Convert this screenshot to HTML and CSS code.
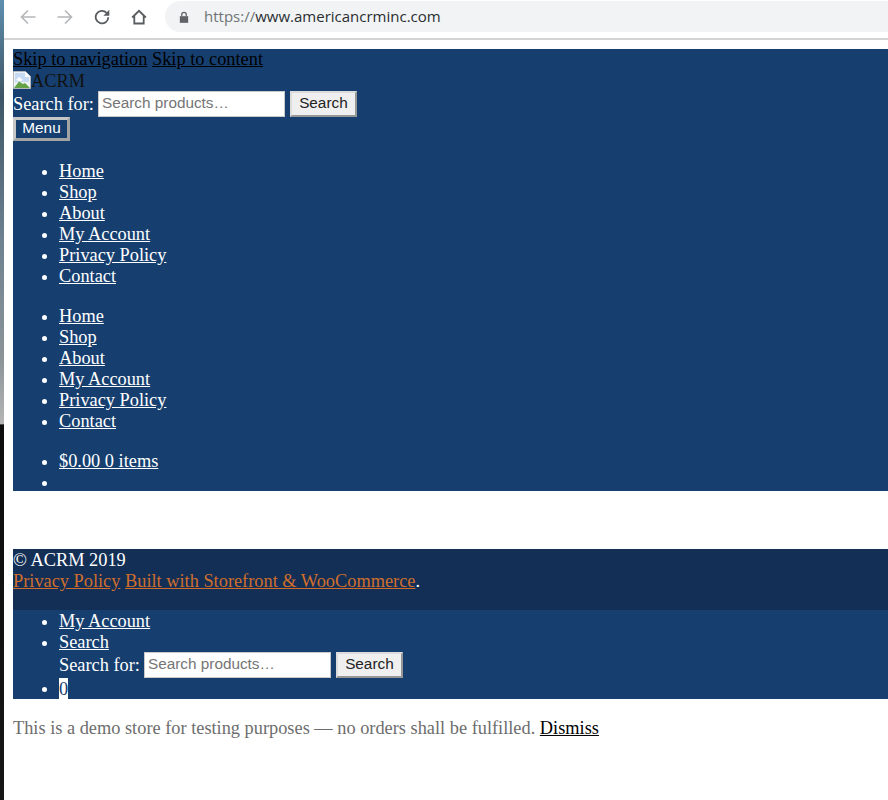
FILE: index.html
```html
<!DOCTYPE html>
<html lang="en">
<head>
<meta charset="utf-8">
<title>ACRM</title>
<link rel="stylesheet" href="styles.css">
</head>
<body>
<div class="desktop">
  <div class="edge"></div>
  <div class="window">
    <div class="toolbar">
      <svg class="nav-icon" viewBox="0 0 16 16"><path class="faded" d="M15.500 8H1.500M8 1.500L1.500 8 8 14.500"/></svg>
      <svg class="nav-icon" viewBox="0 0 16 16"><path class="faded" d="M.5 8h14M8 1.500L14.500 8 8 14.500"/></svg>
      <svg class="nav-icon" viewBox="0 0 16 16"><path class="solid" d="M14.300 8.200a6.300 6.300 0 1 1-1.700-4.400"/><path class="solid-fill" d="M15.300.8v5.900H9.400z"/></svg>
      <svg class="nav-icon" viewBox="0 0 16 16"><path class="solid" d="M1.200 8.500L8 1.800l6.800 6.700M3.300 7v7.500h9.400V7"/></svg>
      <div class="omnibox">
        <svg class="lock" viewBox="0 0 12 14"><path class="lock-body" d="M1 6h10v8H1z"/><path class="lock-loop" d="M3.300 6V4a2.700 2.700 0 0 1 5.400 0v2"/></svg>
        <span class="url"><span class="scheme">https://</span>www.americancrminc.com</span>
      </div>
    </div>
    <div class="page">
      <header class="site-header">
        <div><a class="dark-link" href="#">Skip to navigation</a> <a class="dark-link" href="#">Skip to content</a></div>
        <div class="logo">
          <svg class="broken" viewBox="0 0 18 18"><path fill="#eef1f4" stroke="#b4b8bc" d="M.5.5h12l5 5v12H.5z"/><path fill="#c6daf3" d="M2 2h10v4h4v5H2z"/><path fill="#fff" d="M3 9l3-3 4 3-3 1.500z"/><path fill="#64a345" d="M1 17l5-6.500 4 2.500 2-1 5 5z"/><path fill="#fff" d="M12.500 1l4.500 4.500h-4.500z"/></svg><span class="logo-text">ACRM</span>
        </div>
        <form class="search-form">
          <label class="search-label">Search for:</label>
          <input class="search-input" type="text" placeholder="Search products…">
          <button class="search-btn" type="button">Search</button>
        </form>
        <button class="menu-btn" type="button">Menu</button>
        <ul class="list">
          <li><a href="#">Home</a></li>
          <li><a href="#">Shop</a></li>
          <li><a href="#">About</a></li>
          <li><a href="#">My Account</a></li>
          <li><a href="#">Privacy Policy</a></li>
          <li><a href="#">Contact</a></li>
        </ul>
        <ul class="list">
          <li><a href="#">Home</a></li>
          <li><a href="#">Shop</a></li>
          <li><a href="#">About</a></li>
          <li><a href="#">My Account</a></li>
          <li><a href="#">Privacy Policy</a></li>
          <li><a href="#">Contact</a></li>
        </ul>
        <ul class="list list-last">
          <li><a href="#">$0.00 0 items</a></li>
          <li class="empty-item"></li>
        </ul>
      </header>
      <div class="spacer"></div>
      <footer class="site-footer">
        <div>© ACRM 2019</div>
        <div><a class="orange-link" href="#">Privacy Policy</a> <a class="orange-link" href="#">Built with Storefront &amp; WooCommerce</a>.</div>
      </footer>
      <div class="handheld">
        <ul class="list list-flush">
          <li><a href="#">My Account</a></li>
          <li><a href="#">Search</a>
            <form class="search-form search-form-nested">
              <label class="search-label">Search for:</label>
              <input class="search-input" type="text" placeholder="Search products…">
              <button class="search-btn" type="button">Search</button>
            </form>
          </li>
          <li><span class="count">0</span></li>
        </ul>
      </div>
      <p class="notice">This is a demo store for testing purposes — no orders shall be fulfilled. <a class="dismiss" href="#">Dismiss</a></p>
    </div>
  </div>
</div>
</body>
</html>
```
FILE: styles.css
```css
* { box-sizing: border-box; }
html, body { margin: 0; padding: 0; height: 100%; overflow: hidden; background: #fff; }
body { font-family: "Liberation Serif", serif; font-size: 18.33px; line-height: 21px; color: #000; }
.desktop { display: flex; height: 800px; }
.edge {
  flex: 0 0 4px;
  background: linear-gradient(#5f8fae 0, #3d5566 12%, #6d8190 30%, #8b9498 45%, #b5b5b5 53%, #0d0d0d 53.1%, #161616 100%);
}
.window { flex: 1; min-width: 0; }
.toolbar {
  display: flex;
  align-items: center;
  height: 40px;
  padding: 2px 0 7px 16px;
  border-bottom: 2px solid #d3d3d3;
}
.nav-icon { width: 16px; height: 16px; margin-right: 21px; flex: none; }
.nav-icon:nth-child(4) { margin-right: 18px; }
.faded { fill: none; stroke: #b4b6b8; stroke-width: 1.6; }
.solid { fill: none; stroke: #5a5d60; stroke-width: 1.8; }
.solid-fill { fill: #5a5d60; }
.omnibox {
  flex: 1;
  display: flex;
  align-items: center;
  height: 31px;
  padding-left: 14px;
  background: #f1f3f4;
  border-radius: 16px 0 0 16px;
}
.lock { width: 10px; height: 12px; margin-right: 15px; flex: none; }
.lock-body { fill: #5f6368; }
.lock-loop { fill: none; stroke: #5f6368; stroke-width: 1.5; }
.url { font-family: "Open Sans", sans-serif; font-size: 15px; color: #2b2e31; }
.scheme { color: #6f7377; }
.page { padding: 9px 0 0 9px; }
.site-header { background: #163f70; color: #fff; height: 442px; }
.dark-link { color: #000; }
.logo { display: flex; align-items: flex-start; color: #111; height: 21px; }
.logo-text { line-height: 23px; }
.broken { width: 18px; height: 18px; flex: none; margin-top: 1px; }
.search-form { display: flex; align-items: center; height: 26px; }
.search-form-nested { margin-top: -1px; margin-bottom: 0; }
.search-label { margin-right: 4px; }
.search-input {
  width: 187px;
  height: 26px;
  padding: 0 3px 2px;
  margin: 0 5px 0 0;
  border: 1px solid #c9c9c9;
  border-radius: 0;
  background: #fff;
  font-family: "Liberation Sans", sans-serif;
  font-size: 15.33px;
}
.search-input::placeholder { color: #757575; opacity: 1; }
.search-btn {
  width: 67px;
  height: 26px;
  padding: 0 0 2px;
  border-style: solid;
  border-width: 2px;
  border-color: #dcdcdc #979797 #979797 #dcdcdc;
  border-radius: 0;
  background: #efefef;
  color: #222;
  font-family: "Liberation Sans", sans-serif;
  font-size: 15.33px;
}
.menu-btn {
  display: block;
  width: 57px;
  height: 24px;
  padding: 0 0 3px;
  margin-bottom: 20px;
  border-style: solid;
  border-width: 3px;
  border-color: #c6c6c6 #a3a3a3 #a3a3a3 #c6c6c6;
  border-radius: 0;
  background: #163f70;
  color: #fff;
  font-family: "Liberation Sans", sans-serif;
  font-size: 15.33px;
  line-height: 14px;
}
.list { margin: 19px 0; padding: 0 0 0 46px; }
.list li a { color: #fff; }
.list-last { margin-bottom: 0; }
.list-flush { margin: 0; }
.empty-item { height: 21px; }
.spacer { height: 58px; }
.site-footer { background: #132f56; color: #fff; height: 61px; padding-top: 1px; }
.orange-link { color: #cf6e2c; }
.handheld { background: #163f70; color: #fff; height: 89px; padding-top: 1px; }
.count { display: inline-block; vertical-align: top; height: 21px; padding-top: 1px; line-height: 20px; background: #fff; color: #163f70; }
.notice { margin: 19px 0 0; color: #6d6d6d; }
.dismiss { color: #000; }
```
